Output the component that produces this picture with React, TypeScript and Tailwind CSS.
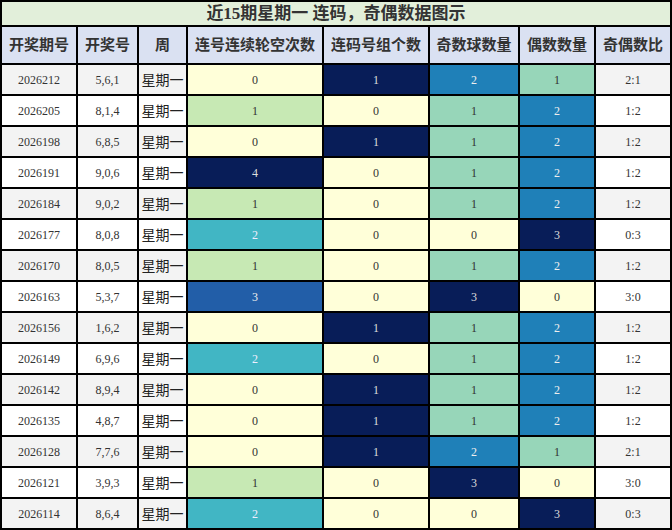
import React from "react";

type Row = [string, string, number, number, number, number, string];

const rows: Row[] = [
  ["2026212", "5,6,1", 0, 1, 2, 1, "2:1"],
  ["2026205", "8,1,4", 1, 0, 1, 2, "1:2"],
  ["2026198", "6,8,5", 0, 1, 1, 2, "1:2"],
  ["2026191", "9,0,6", 4, 0, 1, 2, "1:2"],
  ["2026184", "9,0,2", 1, 0, 1, 2, "1:2"],
  ["2026177", "8,0,8", 2, 0, 0, 3, "0:3"],
  ["2026170", "8,0,5", 1, 0, 1, 2, "1:2"],
  ["2026163", "5,3,7", 3, 0, 3, 0, "3:0"],
  ["2026156", "1,6,2", 0, 1, 1, 2, "1:2"],
  ["2026149", "6,9,6", 2, 0, 1, 2, "1:2"],
  ["2026142", "8,9,4", 0, 1, 1, 2, "1:2"],
  ["2026135", "4,8,7", 0, 1, 1, 2, "1:2"],
  ["2026128", "7,7,6", 0, 1, 2, 1, "2:1"],
  ["2026121", "3,9,3", 1, 0, 3, 0, "3:0"],
  ["2026114", "8,6,4", 2, 0, 0, 3, "0:3"],
];

const headers = ["开奖期号", "开奖号", "周", "连号连续轮空次数", "连码号组个数", "奇数球数量", "偶数数量", "奇偶数比"];

// YlGnBu shades, picked per column range
const skipColor: Record<number, string> = {
  0: "bg-[#ffffd9] text-[#333]",
  1: "bg-[#c7e9b4] text-[#333]",
  2: "bg-[#41b6c4] text-[#eef]",
  3: "bg-[#225ea8] text-[#eee]",
  4: "bg-[#081d58] text-[#ddd]",
};
const pairColor: Record<number, string> = {
  0: "bg-[#ffffd9] text-[#333]",
  1: "bg-[#081d58] text-[#ddd]",
};
const countColor: Record<number, string> = {
  0: "bg-[#ffffd9] text-[#333]",
  1: "bg-[#97d6b9] text-[#333]",
  2: "bg-[#1f80b8] text-[#eee]",
  3: "bg-[#081d58] text-[#ddd]",
};

const serif = "font-['Liberation_Serif','Noto_Sans_CJK_SC',serif]";

export default function App() {
  return (
    <div className="w-[672px] h-[530px] bg-white">
      <div className={`grid grid-cols-[74px_59px_47px_134px_104px_88px_74px_74px] grid-rows-[23px_36px_repeat(15,29px)] gap-[2px] p-[2px] bg-black w-[672px] ${serif}`}>
        <div className="col-span-8 bg-[#e2efda] flex items-center justify-center text-[17px] font-bold text-[#333]">
          近15期星期一 连码，奇偶数据图示
        </div>
        {headers.map((h) => (
          <div key={h} className="bg-[#dae1f2] flex items-center justify-center text-[15px] font-bold text-[#333] whitespace-nowrap">
            {h}
          </div>
        ))}
        {rows.map((r, i) => {
          const base = i % 2 === 0 ? "bg-[#f3f3f3]" : "bg-white";
          const cell = "flex items-center justify-center text-[12px]";
          return (
            <React.Fragment key={r[0]}>
              <div className={`${base} ${cell} text-[#333]`}>{r[0]}</div>
              <div className={`${base} ${cell} text-[#333]`}>{r[1]}</div>
              <div className={`${base} ${cell} text-[14px] text-[#222] font-['Noto_Sans_CJK_SC',sans-serif]`}>星期一</div>
              <div className={`${cell} ${skipColor[r[2]]}`}>{r[2]}</div>
              <div className={`${cell} ${pairColor[r[3]]}`}>{r[3]}</div>
              <div className={`${cell} ${countColor[r[4]]}`}>{r[4]}</div>
              <div className={`${cell} ${countColor[r[5]]}`}>{r[5]}</div>
              <div className={`${base} ${cell} text-[#333]`}>{r[6]}</div>
            </React.Fragment>
          );
        })}
      </div>
    </div>
  );
}
